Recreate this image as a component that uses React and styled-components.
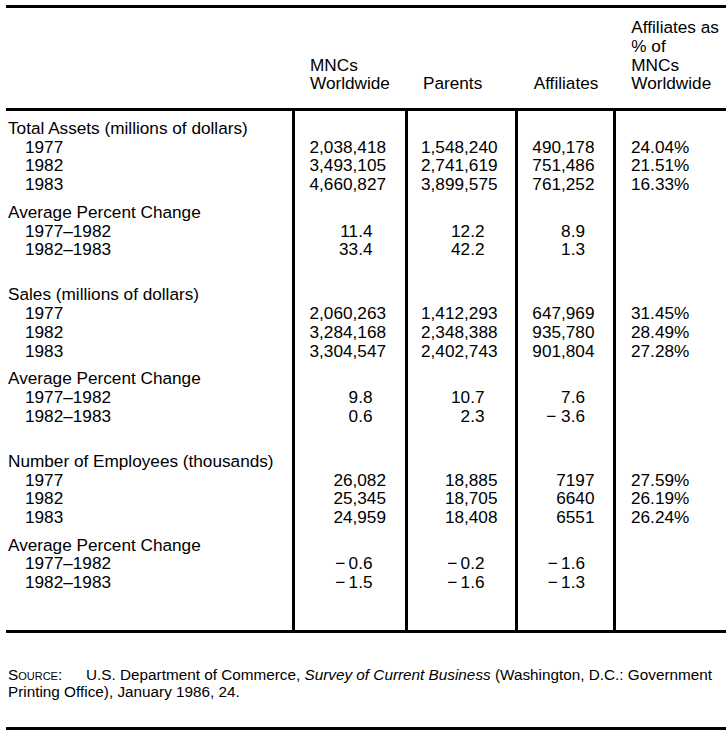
import React from "react";
import styled, { createGlobalStyle } from "styled-components";

const Global = createGlobalStyle`
  html, body { margin: 0; padding: 0; background: #fff; }
  body { font-family: "Liberation Sans", Arial, Helvetica, sans-serif; color: #000; }
`;

const TEMPLATE = "286px 113px 110px 98px 113px";

const Page = styled.div`
  margin: 5px 0 0 6px;
  width: 720px;
`;

const Table = styled.div`
  border-top: 3px solid #000;
  border-bottom: 3px solid #000;
  font-size: 17.2px;
  line-height: 18.7px;
`;

const HeadRow = styled.div`
  display: grid;
  grid-template-columns: ${TEMPLATE};
  align-items: end;
  height: 103px;
  box-sizing: border-box;
  padding-bottom: 15px;
  border-bottom: 3px solid #000;
`;

const HeadCell = styled.div`
  padding-left: ${(p) => p.$pl}px;
`;

const Row = styled.div`
  display: grid;
  grid-template-columns: ${TEMPLATE};
  & > * {
    padding-top: ${(p) => p.$gap || 0}px;
    padding-bottom: ${(p) => p.$end || 0}px;
  }
`;

const Label = styled.div`
  padding-left: ${(p) => (p.$indent ? 19 : 2)}px;
  white-space: nowrap;
`;

const Num = styled.div`
  border-left: 3px solid #000;
  text-align: right;
  padding-right: ${(p) => p.$pr}px;
  white-space: nowrap;
`;

const Pct = styled.div`
  border-left: 3px solid #000;
  padding-left: 15px;
  white-space: nowrap;
`;

const Source = styled.div`
  font-size: 15.3px;
  line-height: 17.3px;
  padding: 33px 0 27px 2px;
  border-bottom: 3px solid #000;
`;

const SourceTag = styled.span`
  display: inline-block;
  width: 78px;
  font-variant: small-caps;
`;

const Title = styled.i`
  font-style: italic;
`;

const COLS = [
  { pr: 19, prd: 32.5 },
  { pr: 17.5, prd: 30.5 },
  { pr: 18.5, prd: 28 },
];

const groups = [
  {
    title: "Total Assets (millions of dollars)",
    years: [
      ["1977", "2,038,418", "1,548,240", "490,178", "24.04%"],
      ["1982", "3,493,105", "2,741,619", "751,486", "21.51%"],
      ["1983", "4,660,827", "3,899,575", "761,252", "16.33%"],
    ],
    change: [
      ["1977–1982", "11.4", "12.2", "8.9"],
      ["1982–1983", "33.4", "42.2", "1.3"],
    ],
  },
  {
    title: "Sales (millions of dollars)",
    years: [
      ["1977", "2,060,263", "1,412,293", "647,969", "31.45%"],
      ["1982", "3,284,168", "2,348,388", "935,780", "28.49%"],
      ["1983", "3,304,547", "2,402,743", "901,804", "27.28%"],
    ],
    change: [
      ["1977–1982", "9.8", "10.7", "7.6"],
      ["1982–1983", "0.6", "2.3", "− 3.6"],
    ],
  },
  {
    title: "Number of Employees (thousands)",
    years: [
      ["1977", "26,082", "18,885", "7197", "27.59%"],
      ["1982", "25,345", "18,705", "6640", "26.19%"],
      ["1983", "24,959", "18,408", "6551", "26.24%"],
    ],
    change: [
      ["1977–1982", "−\u20090.6", "−\u20090.2", "−\u20091.6"],
      ["1982–1983", "−\u20091.5", "−\u20091.6", "−\u20091.3"],
    ],
  },
];

function Line({ label, indent, values = [], pct, decimal, gap, end }) {
  return (
    <Row $gap={gap} $end={end}>
      <Label $indent={indent}>{label}</Label>
      {COLS.map((c, i) => (
        <Num key={i} $pr={decimal ? c.prd : c.pr}>
          {values[i] || "\u00a0"}
        </Num>
      ))}
      <Pct>{pct || "\u00a0"}</Pct>
    </Row>
  );
}

export default function App() {
  return (
    <>
      <Global />
      <Page>
        <Table>
          <HeadRow>
            <div />
            <HeadCell $pl={18}>
              MNCs
              <br />
              Worldwide
            </HeadCell>
            <HeadCell $pl={18}>Parents</HeadCell>
            <HeadCell $pl={18.7}>Affiliates</HeadCell>
            <HeadCell $pl={18.3}>
              Affiliates as
              <br />% of
              <br />
              MNCs
              <br />
              Worldwide
            </HeadCell>
          </HeadRow>
          <div>
            {groups.map((g, gi) => (
              <React.Fragment key={g.title}>
                <Line label={g.title} gap={gi === 0 ? 8 : 26.5} />
                {g.years.map((y) => (
                  <Line key={y[0]} label={y[0]} indent values={y.slice(1, 4)} pct={y[4]} />
                ))}
                <Line label="Average Percent Change" gap={9} />
                {g.change.map((c, ci) => (
                  <Line
                    key={c[0]}
                    label={c[0]}
                    indent
                    decimal
                    values={c.slice(1, 4)}
                    end={gi === groups.length - 1 && ci === g.change.length - 1 ? 38 : 0}
                  />
                ))}
              </React.Fragment>
            ))}
          </div>
        </Table>
        <Source>
          <SourceTag>Source:</SourceTag>
          <span>U.S. Department of Commerce, </span>
          <Title>Survey of Current Business</Title>
          <span> (Washington, D.C.: Government </span>
          <span>Printing Office), January 1986, 24.</span>
        </Source>
      </Page>
    </>
  );
}
